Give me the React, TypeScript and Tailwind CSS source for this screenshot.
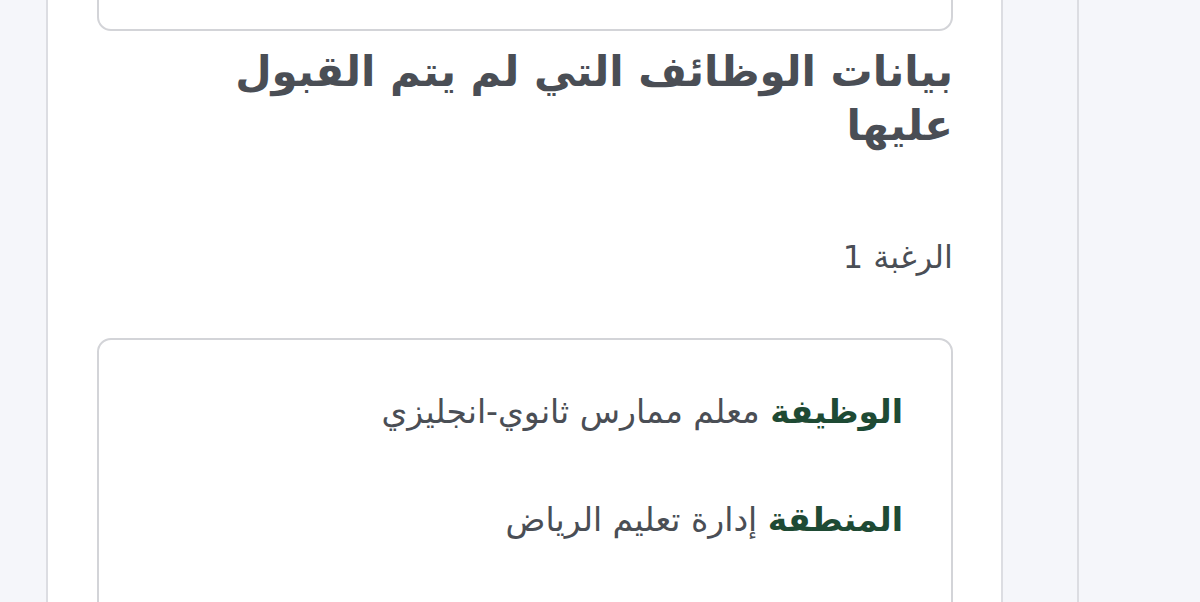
import React from "react";

export default function App() {
  return (
    <div className="flex h-[602px] w-[1200px] overflow-hidden bg-[#f5f6fa]" style={{ fontFamily: '"DejaVu Sans", "Noto Sans", sans-serif' }}>
      <div className="w-[48px] shrink-0 bg-[#f5f6fa] border-r-[2px] border-[#dcdde2]" />
      <div dir="rtl" className="w-[953px] shrink-0 bg-white pr-[48px] pl-[49px] flex flex-col">
        <div className="-mt-[40px] h-[71px] shrink-0 rounded-[14px] border-2 border-[#d3d4d8] bg-white" />
        <h2 className="mt-[14px] text-[42px] font-bold leading-[54px] text-[#4a4e55]">
          بيانات الوظائف التي لم يتم القبول
          <br />
          عليها
        </h2>
        <p className="mt-[84px] text-[32px] leading-[40px] text-[#4a4e55]">الرغبة 1</p>
        <div className="mt-[61px] h-[320px] shrink-0 rounded-[14px] border-2 border-[#d3d4d8] bg-white pt-[52px] pr-[48px] pl-[48px]">
          <p className="text-[33px] leading-[40px] text-[#4a4e55]">
            <span className="font-bold text-[#1e4a34]">الوظيفة</span> معلم ممارس ثانوي-انجليزي
          </p>
          <p className="mt-[68px] text-[33px] leading-[40px] text-[#4a4e55]">
            <span className="font-bold text-[#1e4a34]">المنطقة</span> إدارة تعليم الرياض
          </p>
        </div>
      </div>
      <div className="w-[78px] shrink-0 bg-[#f5f6fa] border-l-[2px] border-r-[2px] border-[#dcdde2]" />
      <div className="flex-1 bg-[#f5f6fa]" />
    </div>
  );
}
